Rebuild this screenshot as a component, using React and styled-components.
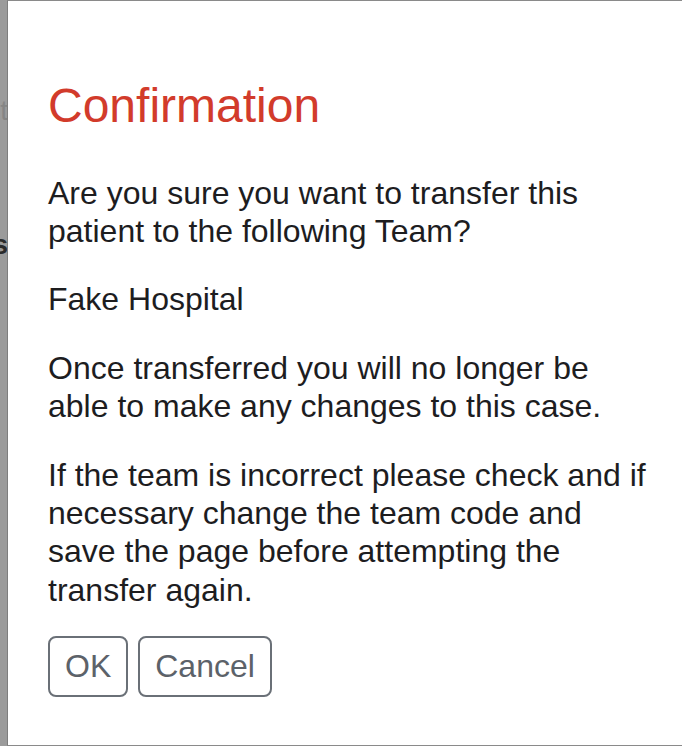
import React from 'react';
import styled, { createGlobalStyle } from 'styled-components';

const GlobalStyle = createGlobalStyle`
  html, body {
    margin: 0;
    padding: 0;
    background: #ffffff;
  }
  body {
    font-family: "Liberation Sans", Arial, Helvetica, sans-serif;
    color: #1d1d1f;
  }
`;

const App = () => {
  return (
    <>
      <GlobalStyle />
      <Page>
        <Backdrop>
          <Ghost top={96} muted>
            Patient
          </Ghost>
          <Ghost top={104}>Details</Ghost>
        </Backdrop>
        <Dialog>
          <Title>Confirmation</Title>
          <Text>Are you sure you want to transfer this patient to the following Team?</Text>
          <Text>Fake Hospital</Text>
          <Text>Once transferred you will no longer be able to make any changes to this case.</Text>
          <Text last>
            If the team is incorrect please check and if necessary change the team code and save
            the page before attempting the transfer again.
          </Text>
          <Actions>
            <Button>OK</Button>
            <Button>Cancel</Button>
          </Actions>
        </Dialog>
      </Page>
    </>
  );
};

export default App;

const Page = styled.div`
  display: flex;
  height: 746px;
  overflow: hidden;
`;

const Backdrop = styled.div`
  width: 7px;
  flex-shrink: 0;
  background: #9b9b9b;
  overflow: hidden;
  display: flex;
  flex-direction: column;
  align-items: flex-end;
`;

const Ghost = styled.div`
  margin-top: ${(props) => props.top}px;
  font-size: 28px;
  line-height: 30px;
  white-space: nowrap;
  font-weight: ${(props) => (props.muted ? 400 : 700)};
  color: ${(props) => (props.muted ? '#858585' : '#2a2a2a')};
  margin-right: -1px;
`;

const Dialog = styled.div`
  flex: 1;
  box-sizing: border-box;
  background: #ffffff;
  border-left: 1px solid #7e7e7e;
  border-top: 1px solid #8a8a8a;
  border-bottom: 1px solid #8a8a8a;
  padding: 76px 30px 0 40px;
  display: flex;
  flex-direction: column;
  align-items: flex-start;
`;

const Title = styled.h1`
  margin: 0 0 39px;
  font-size: 48px;
  line-height: 1.2;
  font-weight: 400;
  color: #d23b2b;
`;

const Text = styled.p`
  margin: 0 0 ${(props) => (props.last ? 27 : 30)}px;
  font-size: 32px;
  line-height: 1.2;
  color: #1d1d1f;
`;

const Actions = styled.div`
  display: flex;
  gap: 10px;
`;

const Button = styled.button`
  font-family: "Liberation Sans", Arial, Helvetica, sans-serif;
  font-size: 32px;
  line-height: 1.2;
  padding: 9px 15px;
  background: #ffffff;
  color: #5c6269;
  border: 2px solid #6a7077;
  border-radius: 8px;
  cursor: pointer;
`;
